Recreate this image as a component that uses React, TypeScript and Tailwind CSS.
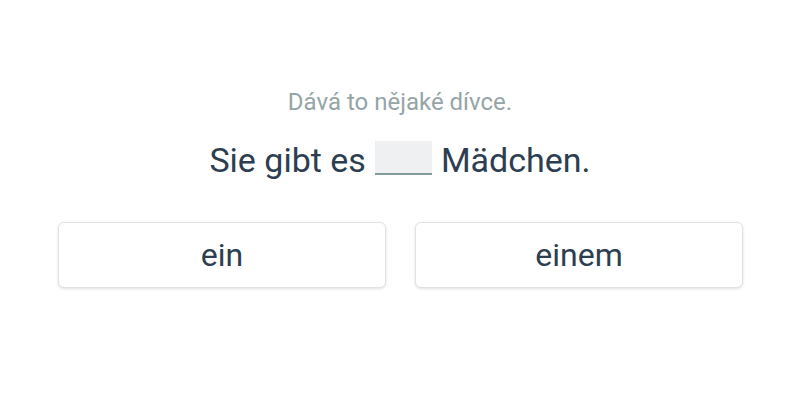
import React from "react";

export default function App() {
  return (
    <div className="w-[800px] h-[400px] bg-white font-['Roboto',sans-serif] flex flex-col items-center">
      <div className="mt-[86px] text-[24px] leading-[32px] text-[#95a5a6]">Dává to nějaké dívce.</div>
      <div className="mt-[22px] flex items-center text-[34px] leading-[40px] text-[#2c3e50]">
        <span>Sie gibt es</span>
        <span className="mx-[9px] mb-[4px] inline-block w-[57px] h-[34px] bg-[#eef0f2] border-b-2 border-[#819b9c]"></span>
        <span>Mädchen.</span>
      </div>
      <div className="mt-[42px] w-full pl-[58px] pr-[57px] flex gap-[29px]">
        <button className="flex-1 h-[66px] rounded-[6px] border border-[#dfe3e6] bg-white shadow-[0_1px_3px_rgba(0,0,0,0.12)] text-[32px] text-[#2c3e50]">ein</button>
        <button className="flex-1 h-[66px] rounded-[6px] border border-[#dfe3e6] bg-white shadow-[0_1px_3px_rgba(0,0,0,0.12)] text-[32px] text-[#2c3e50]">einem</button>
      </div>
    </div>
  );
}
